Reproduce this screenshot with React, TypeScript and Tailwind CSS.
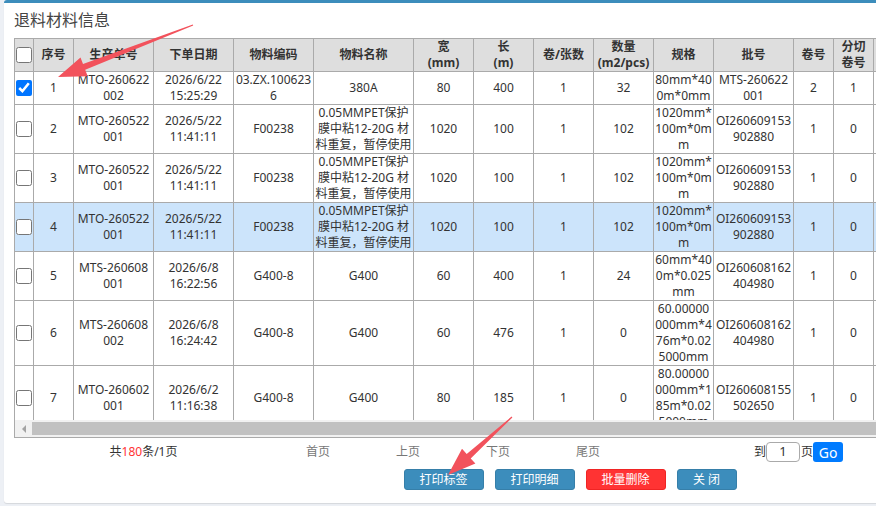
import React from 'react';

type Row = {
  id: number;
  checked?: boolean;
  active?: boolean;
  cells: string[];
};

const COLS =
  'grid-cols-[19px_40px_80px_80px_80px_100px_60px_60px_60px_60px_60px_80px_40px_40px_80px]';

const HEADERS = [
  '序号',
  '生产单号',
  '下单日期',
  '物料编码',
  '物料名称',
  '宽\n(mm)',
  '长\n(m)',
  '卷/张数',
  '数量\n(m2/pcs)',
  '规格',
  '批号',
  '卷号',
  '分切\n卷号',
  '',
];

const PET = '0.05MMPET保护\n膜中粘12-20G 材\n料重复，暂停使用';

const ROWS: Row[] = [
  {
    id: 1,
    checked: true,
    cells: ['1', 'MTO-260622\n002', '2026/6/22\n15:25:29', '03.ZX.100623\n6', '380A', '80', '400', '1', '32', '80mm*40\n0m*0mm', 'MTS-260622\n001', '2', '1', ''],
  },
  {
    id: 2,
    cells: ['2', 'MTO-260522\n001', '2026/5/22\n11:41:11', 'F00238', PET, '1020', '100', '1', '102', '1020mm*\n100m*0m\nm', 'OI260609153\n902880', '1', '0', ''],
  },
  {
    id: 3,
    cells: ['3', 'MTO-260522\n001', '2026/5/22\n11:41:11', 'F00238', PET, '1020', '100', '1', '102', '1020mm*\n100m*0m\nm', 'OI260609153\n902880', '1', '0', ''],
  },
  {
    id: 4,
    active: true,
    cells: ['4', 'MTO-260522\n001', '2026/5/22\n11:41:11', 'F00238', PET, '1020', '100', '1', '102', '1020mm*\n100m*0m\nm', 'OI260609153\n902880', '1', '0', ''],
  },
  {
    id: 5,
    cells: ['5', 'MTS-260608\n001', '2026/6/8\n16:22:56', 'G400-8', 'G400', '60', '400', '1', '24', '60mm*40\n0m*0.025\nmm', 'OI260608162\n404980', '1', '0', ''],
  },
  {
    id: 6,
    cells: ['6', 'MTS-260608\n002', '2026/6/8\n16:24:42', 'G400-8', 'G400', '60', '476', '1', '0', '60.00000\n000mm*4\n76m*0.02\n5000mm', 'OI260608162\n404980', '1', '0', ''],
  },
  {
    id: 7,
    cells: ['7', 'MTO-260602\n001', '2026/6/2\n11:16:38', 'G400-8', 'G400', '80', '185', '1', '0', '80.00000\n000mm*1\n85m*0.02\n5000mm', 'OI260608155\n502650', '1', '0', ''],
  },
];

const cellBase =
  'flex items-center justify-center text-center whitespace-pre overflow-hidden border-r border-b border-[#aaaaaa] leading-[16px]';

const Arrows: React.FC = () => (
  <svg
    className="absolute inset-0 pointer-events-none"
    width={876}
    height={506}
    viewBox="0 0 876 506"
  >
    <polygon
      fill="#f2525c"
      points="193.2,25.6 85.2,69.7 87.7,76.2 58,77 80.5,57.6 83,64.1 192.8,24.4"
    />
    <polygon
      fill="#f2525c"
      points="512.4,417.4 470.7,458.4 475.4,463.6 448,475 462,448.8 466.7,454 511.6,416.6"
    />
  </svg>
);

export default function App() {
  return (
    <div className="relative w-[876px] h-[506px] overflow-hidden bg-[#edf0f5] font-['Noto_Sans','Noto_Sans_CJK_SC',sans-serif] text-[#333333]">
      <div className="ml-[4px] w-[1132px] bg-white border-t-[3px] border-[#3c8dbc] rounded-[3px] px-[10px] pb-[13px] shadow-[0_1px_1px_rgba(0,0,0,0.1)]">
        {/* Title */}
        <div className="pt-[5px] text-[16px] leading-[24px] text-[#444444]">退料材料信息</div>

        {/* Table */}
        <div className="mt-[6px] border border-[#aaaaaa]">
          <div className="h-[381px] overflow-hidden">
            <div className={`grid ${COLS} w-max text-[12px]`}>
              <div className={`${cellBase} bg-[#dedede]`}>
                <input type="checkbox" className="w-4 h-4 m-0" readOnly />
              </div>
              {HEADERS.map((h, i) => (
                <div key={i} className={`${cellBase} bg-[#dedede] font-bold`}>
                  {h}
                </div>
              ))}

              {ROWS.map((row) => (
                <React.Fragment key={row.id}>
                  <div className={`${cellBase} ${row.active ? 'bg-[#cce4fb]' : 'bg-white'}`}>
                    <input
                      type="checkbox"
                      className="w-4 h-4 m-0"
                      checked={!!row.checked}
                      readOnly
                    />
                  </div>
                  {row.cells.map((c, i) => (
                    <div
                      key={i}
                      className={`${cellBase} ${row.active ? 'bg-[#cce4fb]' : 'bg-white'}`}
                    >
                      {c}
                    </div>
                  ))}
                </React.Fragment>
              ))}
            </div>
          </div>

          {/* Horizontal scrollbar */}
          <div className="flex items-center h-[17px] bg-[#f1f1f1]">
            <div className="w-[17px] h-[17px] flex items-center justify-center">
              <div className="w-0 h-0 border-y-[4px] border-y-transparent border-r-[4px] border-r-[#a3a3a3]" />
            </div>
            <div className="flex-1 h-[13px] bg-[#c1c1c1]" />
          </div>
        </div>

        {/* Pagination */}
        <div className="flex items-center h-[20px] mt-[4px] text-[12px]">
          <div className="w-[259px] flex-none text-center">
            共<span className="text-[#ff3333]">180</span>条/1页
          </div>
          <div className="w-[90px] flex-none text-center text-[#777777]">首页</div>
          <div className="w-[90px] flex-none text-center text-[#777777]">上页</div>
          <div className="w-[90px] flex-none text-center text-[#777777]">下页</div>
          <div className="w-[90px] flex-none text-center text-[#777777]">尾页</div>
          <div className="flex items-center pl-[121px]">
            <span>到</span>
            <div className="w-[34px] h-[20px] border border-[#aaaaaa] rounded-[4px] flex items-center justify-center text-[13px]">
              1
            </div>
            <span className="ml-[1px]">页</span>
            <div className="w-[30px] h-[20px] bg-[#007bff] rounded-[3px] text-white text-[14px] flex items-center justify-center">
              Go
            </div>
          </div>
        </div>

        {/* Buttons */}
        <div className="flex justify-center gap-[11px] mt-[7px] text-[12px] text-white">
          <div className="w-[80px] h-[21px] rounded-[3px] bg-[#3c8dbc] border border-[#367fa9] flex items-center justify-center">
            打印标签
          </div>
          <div className="w-[80px] h-[21px] rounded-[3px] bg-[#3c8dbc] border border-[#367fa9] flex items-center justify-center">
            打印明细
          </div>
          <div className="w-[80px] h-[21px] rounded-[3px] bg-[#ff3333] border border-[#f02424] flex items-center justify-center">
            批量删除
          </div>
          <div className="w-[60px] h-[21px] rounded-[3px] bg-[#3c8dbc] border border-[#367fa9] flex items-center justify-center">
            关 闭
          </div>
        </div>
      </div>
      <Arrows />
    </div>
  );
}
